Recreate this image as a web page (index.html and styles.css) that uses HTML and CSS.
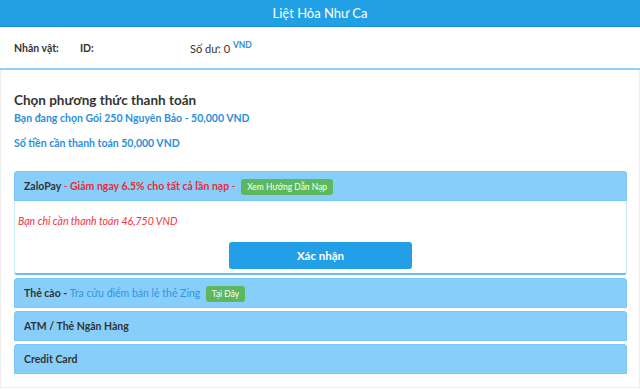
FILE: index.html
```html
<!DOCTYPE html>
<html lang="vi">
  <head>
    <meta charset="UTF-8" />
    <title>Nạp thẻ</title>
    <link rel="stylesheet" href="styles.css">
  </head>
  <body>
    <div class="topbar">Liệt Hỏa Như Ca</div>

    <div class="info">
      <span class="info-name">Nhân vật:</span>
      <span class="info-id">ID:</span>
      <span class="info-balance">Số dư: 0 <sup>VND</sup></span>
    </div>

    <div class="card">
      <h3 class="title">Chọn phương thức thanh toán</h3>
      <p class="pick">Bạn đang chọn Gói 250 Nguyên Bảo - 50,000 VND</p>
      <p class="total">Số tiền cần thanh toán 50,000 VND</p>

      <div class="methods">
        <div class="method">
          <div class="method-head">ZaloPay <span class="dash">-</span> <span class="promo">Giảm ngay 6.5% cho tất cả lần nạp</span> <span class="dash">-</span> <span class="badge">Xem Hướng Dẫn Nạp</span></div>
          <div class="method-body">
            <p class="pay">Bạn chỉ cần thanh toán 46,750 VND</p>
            <button class="confirm">Xác nhận</button>
          </div>
        </div>

        <div class="method">
          <div class="method-head">Thẻ cào - <span class="lookup">Tra cứu điểm bán lẻ thẻ Zing</span> <span class="badge">Tại Đây</span></div>
        </div>

        <div class="method">
          <div class="method-head">ATM / Thẻ Ngân Hàng</div>
        </div>

        <div class="method">
          <div class="method-head">Credit Card</div>
        </div>

        <div class="method">
          <div class="method-head"></div>
        </div>
      </div>
    </div>
  </body>
</html>
```

FILE: styles.css
```css
body {
  margin: 0;
  background: #fff;
  font-family: Lato, "Noto Sans", sans-serif;
  color: #333;
}
.topbar {
  height: 26px;
  line-height: 26px;
  background-color: #22a0e6;
  border-bottom: 1px solid #1a8fd3;
  color: #fff;
  text-align: center;
  font-size: 13px;
}
.info {
  height: 41px;
  display: flex;
  align-items: center;
  padding-left: 14px;
  font-size: 10.5px;
  font-weight: bold;
  color: #333;
  border-bottom: 2px solid #90cff5;
}
.info-name {
  width: 66px;
}
.info-id {
  width: 110px;
}
.info-balance {
  font-weight: normal;
  font-size: 11px;
}
.info-balance sup {
  color: #2b8fdc;
  font-size: 8.5px;
  font-weight: bold;
}
.card {
  height: 317px;
  border: 1px solid #eee;
  border-top: none;
  padding: 0 12px 0 13px;
}
.title {
  margin: 0;
  padding-top: 22px;
  font-size: 13.5px;
  font-weight: bold;
  color: #333;
}
.pick,
.total {
  margin: 0;
  font-size: 10.5px;
  font-weight: bold;
  color: #2b8fdc;
}
.pick {
  margin-top: 4px;
}
.total {
  margin-top: 13px;
}
.methods {
  margin-top: 22px;
  height: 204px;
  overflow: hidden;
}
.method {
  margin-bottom: 3px;
}
.method-head {
  height: 28px;
  line-height: 28px;
  padding-left: 9px;
  background-color: #87cefa;
  border: 1px solid #7cc6f5;
  border-radius: 3px 3px 0 0;
  font-size: 10.5px;
  font-weight: bold;
  color: #333;
}
.dash {
  color: #ee2a35;
  font-weight: normal;
}
.promo {
  color: #ee2a35;
}
.lookup {
  color: #2f95df;
  font-weight: normal;
}
.badge {
  display: inline-block;
  line-height: 16px;
  background-color: #5cb85c;
  color: #fff;
  font-size: 8.5px;
  font-weight: normal;
  padding: 0 6px;
  border-radius: 3px;
  margin-left: 3px;
}
.method-body {
  height: 72px;
  background: #fff;
  border: 1px solid #c9e9fc;
  border-top: none;
  border-bottom: 2px solid #6cbef2;
  border-radius: 0 0 3px 3px;
  text-align: center;
}
.pay {
  margin: 0;
  padding: 14px 0 0 3px;
  text-align: left;
  font-size: 10.5px;
  font-style: italic;
  color: #f2323d;
}
.confirm {
  margin-top: 15px;
  width: 183px;
  height: 27px;
  border: none;
  border-radius: 3px;
  background-color: #229fe6;
  color: #fff;
  font-family: Lato, "Noto Sans", sans-serif;
  font-size: 11.5px;
  font-weight: bold;
}
```
